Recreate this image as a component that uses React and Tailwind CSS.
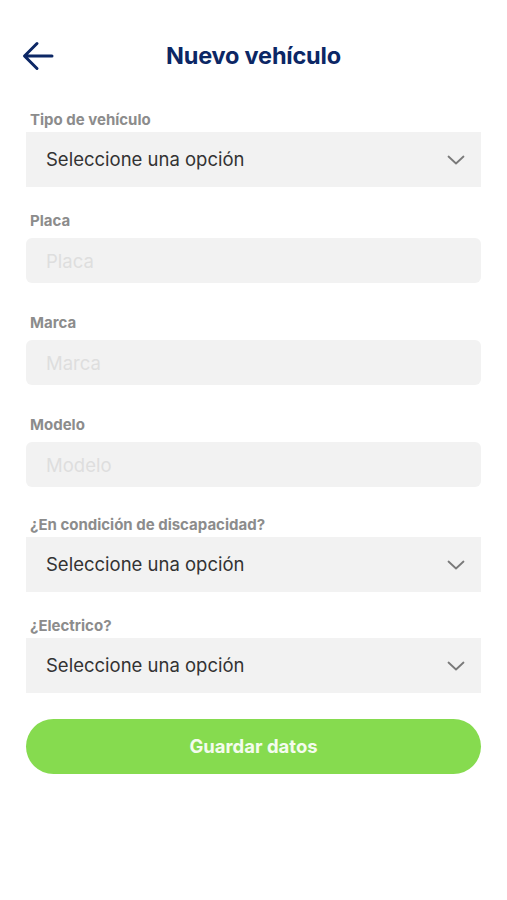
const Chevron = () => (
    <svg width="18" height="10" viewBox="0 0 18 10" fill="none">
        <path d="M1.5 1.5 L9 8.5 L16.5 1.5" stroke="#7a7a7a" strokeWidth="1.8" strokeLinecap="round" strokeLinejoin="round" />
    </svg>
);

const SelectField = ({ label }) => (
    <div>
        <div className="text-[15px] leading-5 font-bold text-[#8c8c8c] pl-1 mb-[2px]">{label}</div>
        <div className="h-[55px] bg-[#f2f2f2] flex items-center justify-between pl-5 pr-4">
            <span className="text-[18.5px] text-[#333333]">Seleccione una opción</span>
            <Chevron />
        </div>
    </div>
);

const InputField = ({ label }) => (
    <div>
        <div className="text-[15px] leading-5 font-bold text-[#8c8c8c] pl-1 mb-[7px]">{label}</div>
        <input
            type="text"
            placeholder={label}
            className="w-full h-[45px] bg-[#f2f2f2] rounded-md px-5 text-[18.5px] outline-none placeholder:text-[#dedede]"
        />
    </div>
);

export default function App() {
    return (
        <div className="w-[507px] h-[900px] bg-white font-['Inter',sans-serif]">
            <div className="relative flex items-center justify-center h-[32px] mt-[40px]">
                <div className="absolute left-[22px] top-0">
                    <svg width="32" height="32" viewBox="0 0 32 32" fill="none">
                        <path d="M30 16 H3 M15 3.5 L2.5 16 L15 28.5" stroke="#0c2765" strokeWidth="3" strokeLinecap="round" strokeLinejoin="round" />
                    </svg>
                </div>
                <h1 className="text-[23.5px] font-bold text-[#0c2765] tracking-[-0.2px]">Nuevo vehículo</h1>
            </div>

            <div className="px-[26px] mt-[38px]">
                <SelectField label="Tipo de vehículo" />
                <div className="mt-[24px]">
                    <InputField label="Placa" />
                </div>
                <div className="mt-[30px]">
                    <InputField label="Marca" />
                </div>
                <div className="mt-[30px]">
                    <InputField label="Modelo" />
                </div>
                <div className="mt-[28px]">
                    <SelectField label="¿En condición de discapacidad?" />
                </div>
                <div className="mt-[24px]">
                    <SelectField label="¿Electrico?" />
                </div>
                <button className="mt-[26px] w-full h-[55px] rounded-full bg-[#86db4f] text-[#f4fbee] text-[18.5px] font-bold">
                    Guardar datos
                </button>
            </div>
        </div>
    );
}
